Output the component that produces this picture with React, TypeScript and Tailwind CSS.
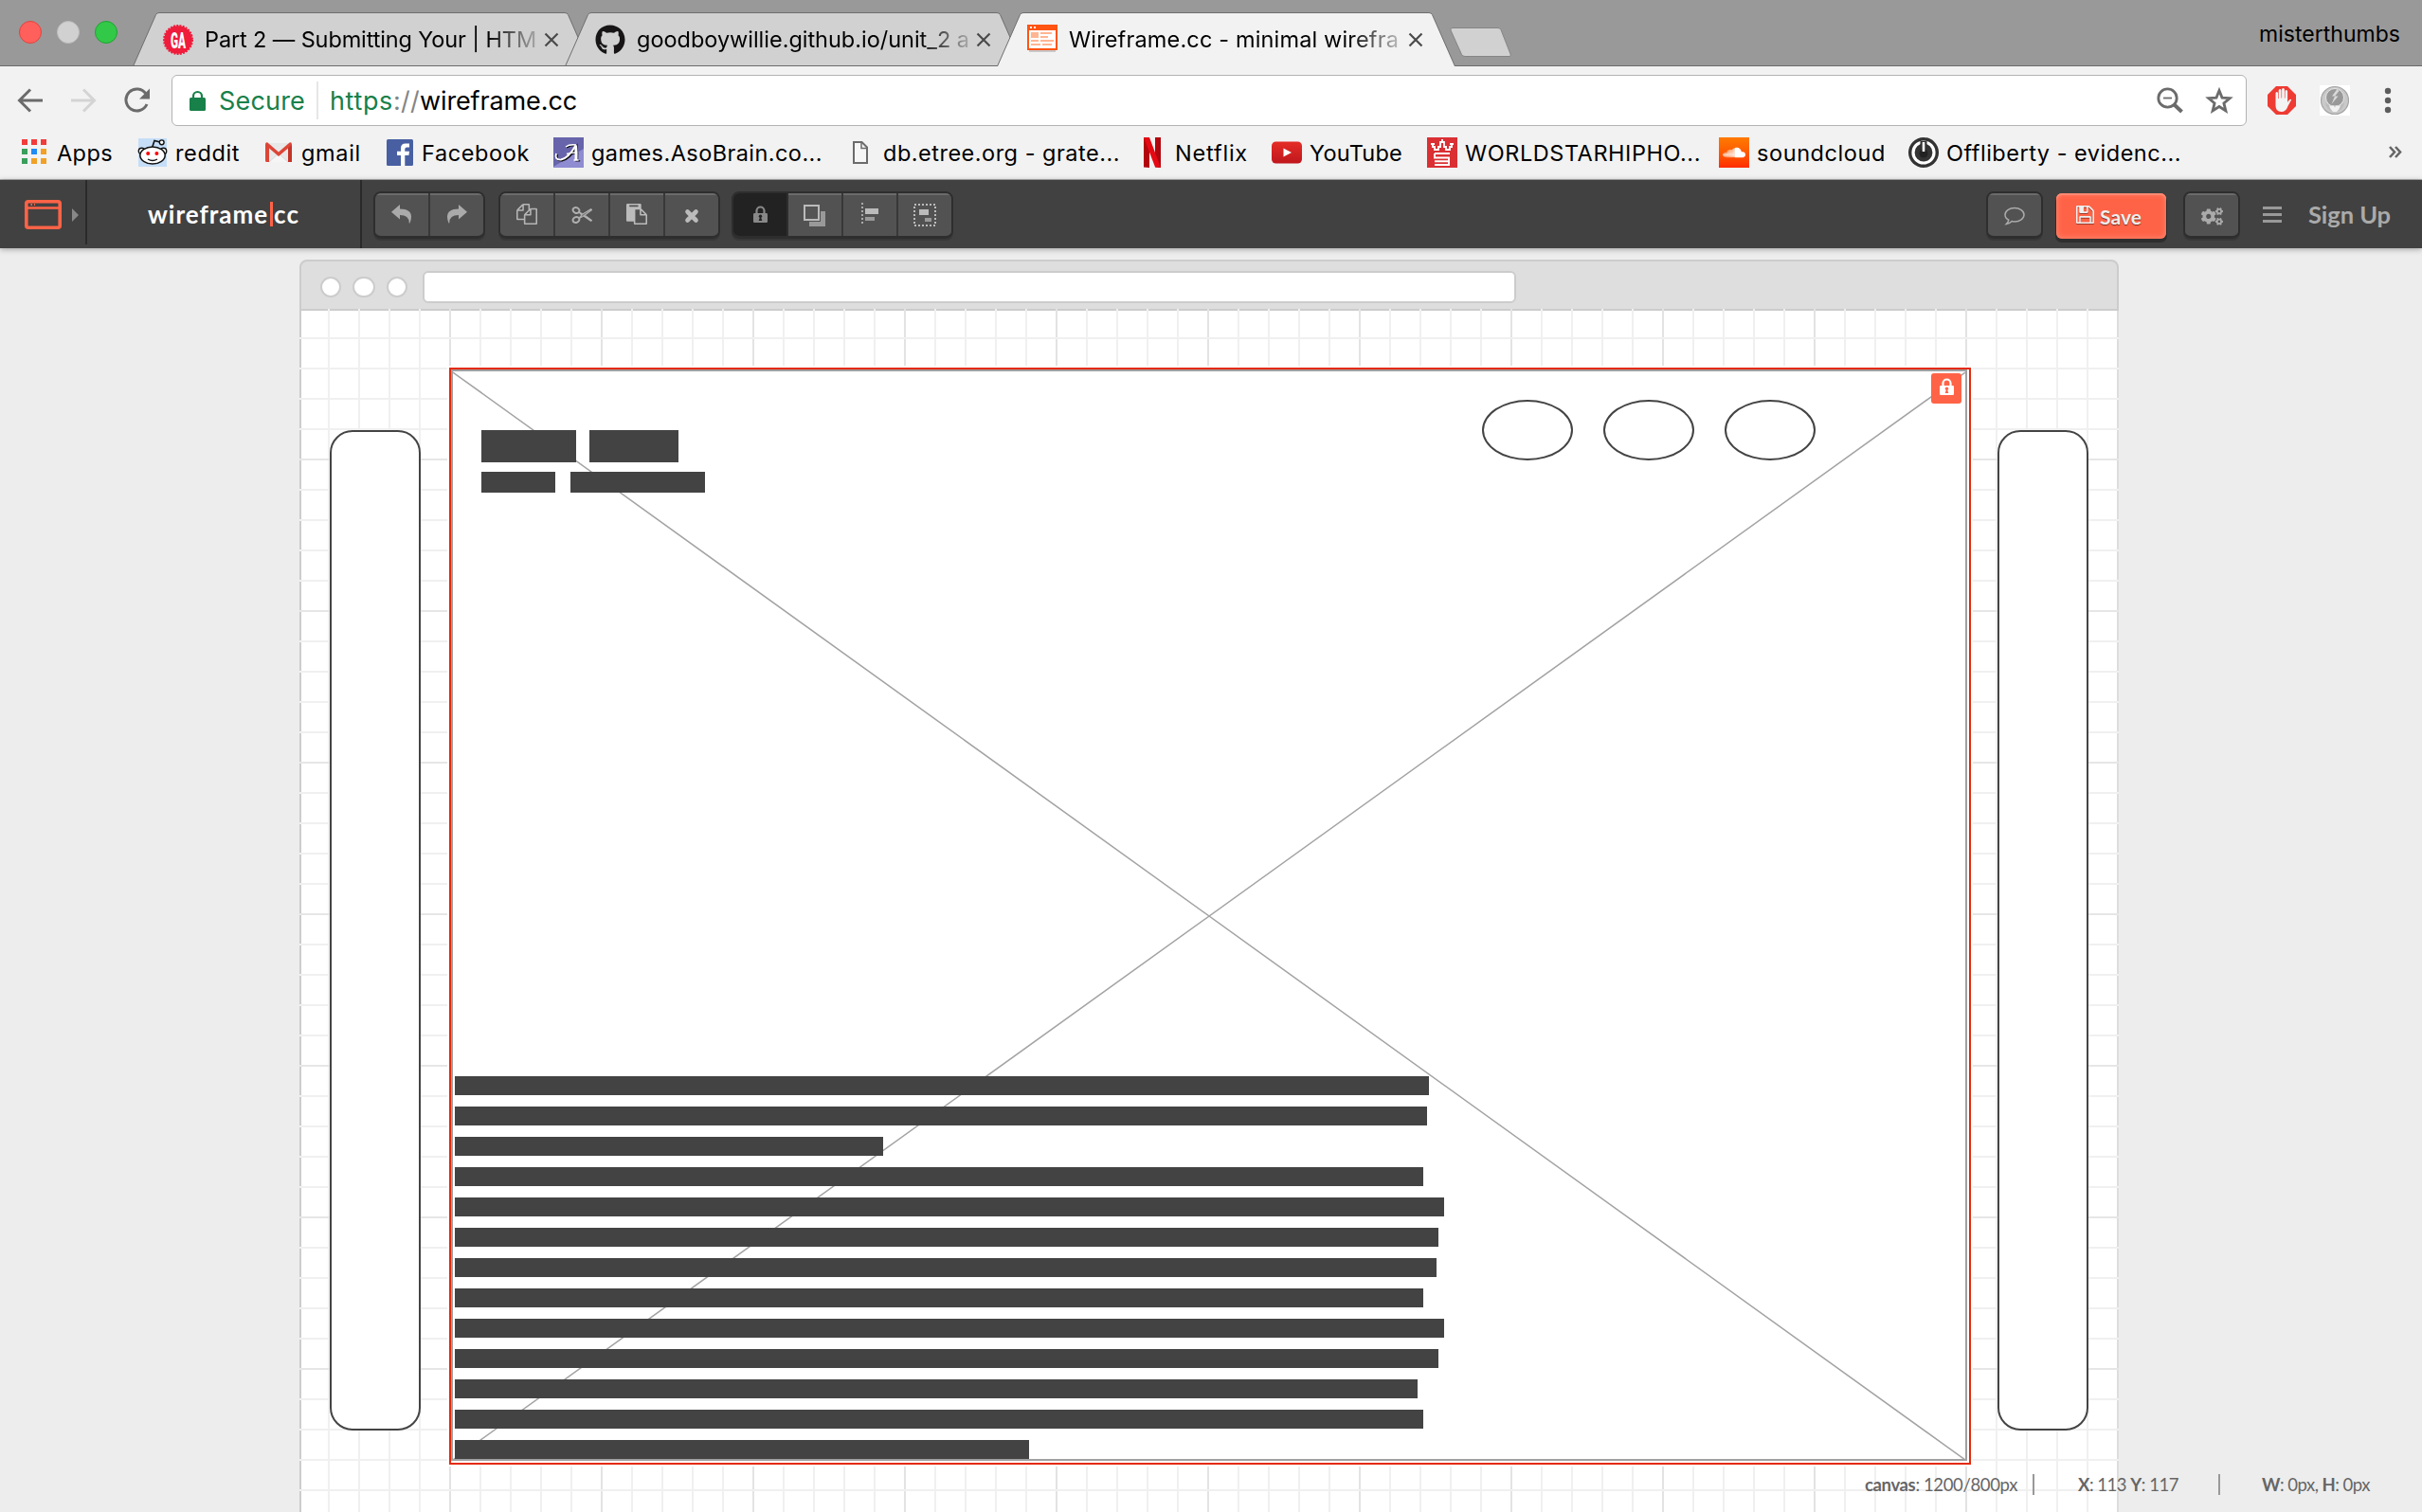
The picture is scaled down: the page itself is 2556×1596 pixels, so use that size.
import { useLayoutEffect, useRef, useState } from "react";
import type { ReactNode } from "react";
import { FaGithub, FaSoundcloud, FaCogs } from "react-icons/fa";

/* Text whose tracking is adjusted so that it fills a given width. */
function Fit({ w, className = "", children }: { w: number; className?: string; children: ReactNode }) {
  const ref = useRef<HTMLSpanElement>(null);
  const [ls, setLs] = useState(0);
  useLayoutEffect(() => {
    const el = ref.current;
    if (!el) return;
    const n = (el.textContent || "").length;
    setLs((w - el.getBoundingClientRect().width) / n);
  }, [w]);
  return (
    <span ref={ref} className={"inline-block shrink-0 whitespace-pre " + className} style={{ letterSpacing: ls }}>
      {children}
    </span>
  );
}

/* ---------- favicons ---------- */

function GaIcon() {
  return (
    <svg className="overflow-visible" width="32" height="32" viewBox="0 0 32 32">
      <circle cx="16" cy="16" r="14.8" fill="#ef1c3b" />
      <circle cx="16" cy="16" r="15" fill="none" stroke="#ef1c3b" strokeWidth="2" strokeDasharray="1.96 1.3" />
      <text x="16" y="24.5" textAnchor="middle" textLength="16" lengthAdjust="spacingAndGlyphs" fontFamily="Roboto" fontWeight="900" fontSize="24" fill="#fff">GA</text>
    </svg>
  );
}

function WireIcon() {
  return (
    <svg width="32" height="32" viewBox="0 0 32 32">
      <rect x="2" y="27" width="28" height="2" fill="#c9c9c9" />
      <rect x="1" y="1" width="30" height="25" fill="#fff" stroke="#ff5412" strokeWidth="2" />
      <rect x="0" y="0" width="32" height="6" fill="#ff5412" />
      <path d="M3 2h2v2H3zM7 2h2v2H7z" fill="#fff" />
      <path d="M4 8h8v6H4zM14 8h12v2H14zM14 12h8v2h-8zM4 16h8v2H4zM14 16h14v2H14zM4 20h10v2H4zM16 20h10v2H16z" fill="#ffb592" />
    </svg>
  );
}

function AppsIcon() {
  return (
    <svg width="26" height="26" viewBox="0 0 26 26">
      <path d="M0 0h6v6H0zM10 0h6v6h-6zM20 0h6v6h-6z" fill="#f23b3b" />
      <path d="M0 10h6v6H0zM0 20h6v6H0z" fill="#3a9e5c" />
      <path d="M10 10h6v6h-6z" fill="#1f8bf5" />
      <path d="M20 10h6v6h-6zM10 20h6v6h-6zM20 20h6v6h-6z" fill="#f0a126" />
    </svg>
  );
}

function RedditIcon() {
  return (
    <svg width="32" height="32" viewBox="0 0 32 32">
      <rect x="1" y="1" width="30" height="30" fill="#c6def7" />
      <path d="M15.5 11 18 3.5l6 1.5" fill="none" stroke="#111" strokeWidth="1.6" />
      <circle cx="25.7" cy="5.3" r="2.4" fill="#fff" stroke="#111" strokeWidth="1.4" />
      <circle cx="4.5" cy="14.5" r="3.2" fill="#fff" stroke="#111" strokeWidth="1.4" />
      <circle cx="27.5" cy="14.5" r="3.2" fill="#fff" stroke="#111" strokeWidth="1.4" />
      <ellipse cx="16" cy="19" rx="13.2" ry="9" fill="#fff" stroke="#111" strokeWidth="1.5" />
      <circle cx="11.2" cy="17" r="2" fill="#f00" />
      <circle cx="20.4" cy="17" r="2" fill="#f00" />
      <path d="M11 23q5 3 10 0" fill="none" stroke="#111" strokeWidth="1.4" />
    </svg>
  );
}

function GmailIcon() {
  return (
    <svg width="28" height="22" viewBox="0 0 28 22">
      <rect x="1" y="1" width="26" height="20" rx="1" fill="#e8e8e8" />
      <path d="M4 21 14 11.5 24 21z" fill="#f5f5f5" />
      <path d="M4 21 14 12 24 21" fill="none" stroke="#cfcfcf" strokeWidth="0.8" />
      <path d="M0 2.5Q0 0 2.4.4L14 10.4 25.6.4Q28 0 28 2.5V21h-4V6.6L14 15 4 6.6V21H1.5Q0 21 0 19.500z" fill="#dc4537" />
      <path d="M24 6.600l4-3.500V20q0 1-1.500 1H24z" fill="#c43428" />
    </svg>
  );
}

function FacebookIcon() {
  return (
    <svg width="28" height="28" viewBox="0 0 28 28">
      <rect width="28" height="28" rx="1.5" fill="#4860a2" />
      <path d="M15 28V17h-4v-4.300h4V9.500Q15 4.500 20 4.500h4v4h-2.700q-2 0-2 2v2.200H24L23.400 17h-4.100v11z" fill="#fff" />
    </svg>
  );
}

function AsoIcon() {
  return (
    <svg width="32" height="32" viewBox="0 0 32 32">
      <rect width="32" height="32" fill="#6764ab" />
      <path d="M0 31 32 12v20H0z" fill="#8f8cd2" />
      <g fill="none" stroke="#111" strokeWidth="2" transform="translate(1.200 .9)">
        <path d="M3 17q-2 7 5 6.500Q16 22 23.500 8.500q1 8 .5 15.500" />
        <path d="M14 17.500q5-1.500 11-1.500M22 24h5M13 10q4-3 11-2" strokeWidth="1.400" />
      </g>
      <g fill="none" stroke="#fff">
        <path d="M3 17q-2 7 5 6.500Q16 22 23.500 8.500" strokeWidth="1.800" />
        <path d="M23.500 8.500q1 8 .5 15.500" strokeWidth="3" />
        <path d="M14 17.500q5-1.500 11-1.500M21.500 24h5M13 10q4-3 11-2" strokeWidth="1.400" />
      </g>
    </svg>
  );
}

function PageIcon() {
  return (
    <svg width="16" height="24" viewBox="0 0 16 24">
      <path d="M1 1h8.500L15 6.500V23H1z" fill="#f6f6f6" stroke="#6b6b6b" strokeWidth="2" />
      <path d="M9 1v6.500h6" fill="none" stroke="#6b6b6b" strokeWidth="1.500" />
    </svg>
  );
}

function NetflixIcon() {
  return (
    <svg width="18" height="32" viewBox="0 0 18 32">
      <path d="M0 0h6v32l-6-.5zM12 0h6v32l-6-.5z" fill="#b1060f" />
      <path d="M0 0h6l12 32-6-.7z" fill="#e50914" />
    </svg>
  );
}

function YoutubeIcon() {
  return (
    <svg width="32" height="24" viewBox="0 0 32 24">
      <defs>
        <linearGradient id="yt" x1="0" y1="0" x2="0" y2="1">
          <stop offset="0" stopColor="#e52d27" />
          <stop offset="1" stopColor="#bf171d" />
        </linearGradient>
      </defs>
      <rect y=".5" width="32" height="23" rx="4.500" fill="url(#yt)" />
      <path d="M12.500 7.500v9l8.500-4.500z" fill="#fff" />
    </svg>
  );
}

function WshhIcon() {
  return (
    <svg width="32" height="32" viewBox="0 0 32 32">
      <rect width="32" height="32" fill="#da3034" />
      <path d="M4 7h4M6 7v3h2v3h4v-3h2V5h4v5h2v3h4v-3h2V7M24 7h4M16 2v4" fill="none" stroke="#fff" strokeWidth="1.800" />
      <path d="M8 17h16M8 17v4.500h15v3.800H8M23 25v4H8" fill="none" stroke="#fff" strokeWidth="1.900" />
    </svg>
  );
}

function SoundcloudIcon() {
  return (
    <div className="flex size-8 items-center justify-center bg-gradient-to-b from-[#ff7a00] to-[#ff2a00] text-white">
      <FaSoundcloud size={24} />
    </div>
  );
}

function OfflibertyIcon() {
  return (
    <svg width="32" height="32" viewBox="0 0 32 32">
      <circle cx="16" cy="16" r="16" fill="#333" />
      <circle cx="16" cy="16" r="11" fill="none" stroke="#fff" strokeWidth="3.200" />
      <path d="M12.500 4h7v14h-7z" fill="#333" />
      <circle cx="16" cy="17" r="4.500" fill="#222" />
      <path d="M16 5v10" stroke="#fff" strokeWidth="2.600" />
    </svg>
  );
}

/* ---------- browser chrome ---------- */

function Tab({ icon, title, w, active = false, className = "" }: { icon: ReactNode; title: string; w: number; active?: boolean; className?: string }) {
  return (
    <div className={"relative h-[57px] w-[484px] shrink-0 " + className}>
      <svg className="absolute inset-0" width="484" height="57" viewBox="0 0 484 57">
        <path
          d="M0.500 57 24.500 2.500Q25.500 .5 28 .5H456Q458.500 .5 459.500 2.500L483.500 57"
          fill={active ? "#f2f2f2" : "#d1d1d1"}
          stroke="#6e6e6e"
        />
        {!active && <path d="M0 56.500h484" stroke="#6a6a6a" />}
      </svg>
      <div className="relative flex h-full items-center pl-8 pr-[34px]">
        <div className="mt-px flex size-8 items-center justify-center">{icon}</div>
        <div className="ml-3 mt-px flex h-10 w-[354px] items-center [mask-image:linear-gradient(to_right,#000_84%,#0002_100%)]">
          <Fit w={w} className="text-[23.5px] leading-8 text-black">{title}</Fit>
        </div>
        <svg className="ml-auto" width="16" height="16" viewBox="0 0 16 16">
          <path d="m1.500 1.500 13 13M14.500 1.500l-13 13" stroke="#4a4a4a" strokeWidth="2.200" />
        </svg>
      </div>
    </div>
  );
}

function TabStrip() {
  return (
    <div className="flex h-[70px] border-b border-[#6a6a6a] bg-[#999]">
      <div className="flex w-[140px] shrink-0 gap-4 pl-5 pt-[22px]">
        <i className="size-6 rounded-full border border-[#e0443e] bg-[#ff605c]" />
        <i className="size-6 rounded-full border border-[#bdbdbd] bg-[#d1d1d1]" />
        <i className="size-6 rounded-full border border-[#1fa233] bg-[#33c948]" />
      </div>
      <div className="flex pt-[13px]">
        <Tab icon={<GaIcon />} title="Part 2 — Submitting Your | HTM" w={350} />
        <Tab icon={<FaGithub size={32} color="#171515" />} title="goodboywillie.github.io/unit_2 a" w={351} className="-ml-[28px]" />
        <Tab icon={<WireIcon />} title="Wireframe.cc - minimal wirefra" w={348} active className="z-10 -ml-[28px]" />
      </div>
      <svg className="-ml-2 mt-7" width="70" height="36" viewBox="0 0 70 36">
        <path d="M5 1.500h48q2 0 3 2L66 29q1 2.500-1 2.500H18q-2.500 0-3.500-2L3 4Q2 1.500 5 1.500z" fill="#d1d1d1" stroke="#858585" />
      </svg>
      <div className="ml-auto pr-[23px] pt-[21px]">
        <Fit w={149} className="text-[23px] leading-[30px] text-black">misterthumbs</Fit>
      </div>
    </div>
  );
}

function AddressBar() {
  return (
    <div className="flex h-[72px] items-start pt-[9px]">
      <div className="flex w-[181px] shrink-0 pl-[18px] pt-[13px]">
        <svg width="28" height="28" viewBox="0 0 28 28">
          <path d="M14 2.500 2.500 14 14 25.500M3 14h24" fill="none" stroke="#6b6b6b" strokeWidth="3" />
        </svg>
        <svg className="ml-7" width="28" height="28" viewBox="0 0 28 28">
          <path d="M14 2.500 25.500 14 14 25.500M1 14h24" fill="none" stroke="#d4d4d4" strokeWidth="3" />
        </svg>
        <svg className="ml-7" width="30" height="28" viewBox="0 0 30 28">
          <path d="M24 7A11.500 11.500 0 1 0 25 18" fill="none" stroke="#6b6b6b" strokeWidth="3" />
          <path d="M28 1.500v11H17z" fill="#6b6b6b" />
        </svg>
      </div>
      <div className="flex h-[54px] w-[2190px] items-center rounded-md border border-[#b3b3b3] bg-white text-[27px] leading-9">
        <svg className="ml-[18px]" width="17" height="22" viewBox="0 0 17 22">
          <rect x="0" y="8" width="17" height="14" rx="1.500" fill="#188049" />
          <path d="M4 9V6.500a4.500 4.500 0 0 1 9 0V9" fill="none" stroke="#188049" strokeWidth="2.200" />
        </svg>
        <Fit w={91} className="ml-[14px] mt-[2px] text-[#188049]">Secure</Fit>
        <div className="ml-3 h-10 w-0.5 bg-[#e6e6e6]" />
        <Fit w={67} className="ml-3 mt-[2px] text-[#188049]">https</Fit>
        <Fit w={28} className="mt-[2px] text-[#858585]">://</Fit>
        <Fit w={166} className="mt-[2px] text-black">wireframe.cc</Fit>
        <svg className="ml-auto" width="28" height="28" viewBox="0 0 28 28">
          <circle cx="11.500" cy="11.500" r="9.700" fill="none" stroke="#6b6b6b" strokeWidth="2.800" />
          <path d="M7 11.500h9" stroke="#6b6b6b" strokeWidth="1.800" />
          <path d="m18 18 8.500 8" stroke="#6b6b6b" strokeWidth="4" />
        </svg>
        <svg className="ml-[23px] mr-[13px]" width="30" height="30" viewBox="0 0 30 30">
          <path d="m15 4.500 3 7.600 8.200.6-6.300 5.200 2 8L15 21.500l-6.900 4.400 2-8-6.300-5.200 8.200-.6z" fill="none" stroke="#6b6b6b" strokeWidth="2.800" />
        </svg>
      </div>
      <svg className="ml-[22px] mt-3" width="30" height="30" viewBox="0 0 30 30">
        <path d="M9 0h12l9 9v12l-9 9H9l-9-9V9z" fill="#ee3b33" />
        <path d="M8.500 16V7.500q0-1.500 1.300-1.500t1.300 1.500V13h.6V4.500q0-1.500 1.400-1.500t1.400 1.500V12.500h.6V3.500Q15.100 2 16.500 2t1.400 1.500v9h.6V5.500q0-1.500 1.300-1.500t1.300 1.500V17l1.800-2.500q1.200-1.300 2.300-.3L21.500 21q-2 6-7 6-6 0-6-6.500z" fill="#f3f3f3" />
      </svg>
      <svg className="ml-[25px] mt-[11px]" width="32" height="32" viewBox="0 0 32 32">
        <rect width="32" height="32" fill="#fff" />
        <circle cx="16" cy="16" r="14.500" fill="#c9c9c9" stroke="#a5a5a5" strokeWidth="1.200" />
        <circle cx="16" cy="13" r="9.500" fill="#999" stroke="#e6e6e6" strokeWidth="1" />
        <path d="m18.500 4-5.500 7.500h3L12.500 20l7-8.500H16L20.500 6z" fill="#d9d9d9" />
        <path d="M6 18q1 9 10 10.500Q25 27 26 18l-4 3.500-6-.5-6 .5z" fill="#bcbcbc" />
        <path d="M10 21.500h5l1 2 1-2h5l-1.500 3.500L18 28h-4l-2.500-3z" fill="#f2f2f2" />
      </svg>
      <svg className="ml-[36px] mt-[13px]" width="8" height="28" viewBox="0 0 8 28">
        <circle cx="4" cy="4" r="3.200" fill="#5c5c5c" />
        <circle cx="4" cy="14" r="3.200" fill="#5c5c5c" />
        <circle cx="4" cy="24" r="3.200" fill="#5c5c5c" />
      </svg>
    </div>
  );
}

function Bookmark({ icon, label, w, className }: { icon: ReactNode; label: string; w: number; className: string }) {
  return (
    <div className={"flex shrink-0 items-center gap-2 " + className}>
      <div className="flex h-8 shrink-0 items-center justify-center">{icon}</div>
      <Fit w={w} className="mt-[2px] text-[23.500px] leading-8 text-black">{label}</Fit>
    </div>
  );
}

function BookmarksBar() {
  return (
    <div className="flex h-12 items-start border-b border-[#b0b0b0] pl-[23px] pt-[2px]">
      <Bookmark icon={<div className="mt-[-2px] pr-[3px]"><AppsIcon /></div>} label="Apps" w={59} className="w-[122px]" />
      <Bookmark icon={<RedditIcon />} label="reddit" w={68} className="w-[135px]" />
      <Bookmark icon={<div className="pr-[2px]"><GmailIcon /></div>} label="gmail" w={63} className="w-[128px]" />
      <Bookmark icon={<div className="pr-px"><FacebookIcon /></div>} label="Facebook" w={114} className="w-[176px]" />
      <Bookmark icon={<AsoIcon />} label="games.AsoBrain.co..." w={244} className="w-[316px]" />
      <Bookmark icon={<div className="pr-[8px]"><PageIcon /></div>} label="db.etree.org - grate..." w={250} className="w-[307px]" />
      <Bookmark icon={<div className="pr-[7px]"><NetflixIcon /></div>} label="Netflix" w={77} className="w-[135px]" />
      <Bookmark icon={<div className="-mt-px"><YoutubeIcon /></div>} label="YouTube" w={98} className="w-[164px]" />
      <Bookmark icon={<WshhIcon />} label="WORLDSTARHIPHO..." w={249} className="w-[308px]" />
      <Bookmark icon={<SoundcloudIcon />} label="soundcloud" w={136} className="w-[200px]" />
      <Bookmark icon={<OfflibertyIcon />} label="Offliberty - evidenc..." w={248} className="w-[290px]" />
      <svg className="ml-auto mr-[21px] mt-[9px]" width="15" height="15" viewBox="0 0 15 15">
        <path d="m2 2 5 5.500L2 13M8 2l5 5.500L8 13" fill="none" stroke="#666" strokeWidth="2.600" />
      </svg>
    </div>
  );
}

/* ---------- editor toolbar ---------- */

function UndoIcon({ flip = false }: { flip?: boolean }) {
  return (
    <svg className={"-mt-1 " + (flip ? "-scale-x-100" : "")} width="22" height="20" viewBox="0 0 22 20">
      <path d="M9 0v4.500Q21 4.500 21 13q0 3-1.500 6.500-.8.300-.8-.5Q18.700 11 9 11v4.500L0 7.700z" fill="#aaa" />
    </svg>
  );
}

function CopyIcon() {
  return (
    <svg className="-mt-1" width="22" height="22" viewBox="0 0 1792 1792" fill="#b5b5b5">
      <path d="M1696 384q40 0 68 28t28 68v1216q0 40-28 68t-68 28h-960q-40 0-68-28t-28-68v-288h-544q-40 0-68-28t-28-68v-672q0-40 20-88t48-76l408-408q28-28 76-48t88-20h416q40 0 68 28t28 68v328q68-40 128-40h416zm-544 213l-299 299h299v-299zm-640-384l-299 299h299v-299zm196 647l316-316v-416h-384v416q0 40-28 68t-68 28h-416v640h512v-256q0-40 20-88t48-76zm956 804v-1152h-384v416q0 40-28 68t-68 28h-416v640h896z" />
    </svg>
  );
}

function CutIcon() {
  return (
    <svg className="-mt-0.5" width="22" height="18" viewBox="0 0 22 18" fill="none" stroke="#b0b0b0">
      <ellipse cx="5" cy="4" rx="3.500" ry="2.800" transform="rotate(25 5 4)" strokeWidth="2" />
      <ellipse cx="5" cy="14" rx="3.500" ry="2.800" transform="rotate(-25 5 14)" strokeWidth="2" />
      <path d="M8 5.800 12 8l8.500-5.200 1 .7L12 10.500 8 12.500M8 5.800l3 3.200-3 3.500M13 10l7.500 5.300 1-.7-7-5" strokeWidth="1.300" />
    </svg>
  );
}

function PasteIcon() {
  return (
    <svg className="-mt-1" width="22" height="22" viewBox="0 0 1792 1792" fill="#bbb">
      <path d="M768 1664h896v-640h-416q-40 0-68-28t-28-68v-416h-384v1152zm256-1440v-64q0-13-9.500-22.500t-22.500-9.500h-704q-13 0-22.500 9.500t-9.500 22.500v64q0 13 9.500 22.500t22.500 9.500h704q13 0 22.500-9.500t9.500-22.500zm256 672h299l-299-299v299zm512 128v672q0 40-28 68t-68 28h-960q-40 0-68-28t-28-68v-160h-544q-40 0-68-28t-28-68v-1344q0-40 28-68t68-28h1088q40 0 68 28t28 68v328q21 13 36 28l408 408q28 28 48 76t20 88z" />
    </svg>
  );
}

function DeleteIcon() {
  return (
    <svg width="16" height="16" viewBox="0 0 16 16">
      <path d="m3.500 3.500 9 9M12.500 3.500l-9 9" stroke="#bbb" strokeWidth="4.600" strokeLinecap="round" />
    </svg>
  );
}

function LockIcon({ color, hole }: { color: string; hole: string }) {
  return (
    <svg className="-mt-1" width="15" height="18" viewBox="0 0 15 18">
      <path d="M3.500 9V5.500a4 4 0 0 1 8 0V9" fill="none" stroke={color} strokeWidth="2.200" />
      <rect x="0" y="8" width="15" height="10" rx="1.200" fill={color} />
      <circle cx="7.500" cy="11.300" r="1.700" fill={hole} />
      <path d="M7 12h1l1.300 4H5.700z" fill={hole} />
    </svg>
  );
}

function LayerIcon() {
  return (
    <svg width="24" height="24" viewBox="0 0 24 24">
      <path d="M18 7h5v16H6v-5h12z" fill="#999" />
      <rect x="1" y="1" width="15" height="15" fill="#555" stroke="#bbb" strokeWidth="2" />
    </svg>
  );
}

function AlignIcon() {
  return (
    <svg className="-mt-1" width="18" height="24" viewBox="0 0 18 24">
      <path d="M1 0v23" stroke="#aaa" strokeWidth="2" strokeDasharray="2 2" />
      <path d="M4 6h14v6H4z" fill="#bbb" />
      <path d="M4 15h10v4H4z" fill="#999" />
    </svg>
  );
}

function GroupIcon() {
  return (
    <svg className="-mt-0.5" width="24" height="24" viewBox="0 0 24 24">
      <rect x="1" y="1" width="22" height="22" fill="none" stroke="#bbb" strokeWidth="2" strokeDasharray="2 2" />
      <path d="M6 6h10v6H6z" fill="#bbb" />
      <path d="M12 15h7v4h-7z" fill="#999" />
    </svg>
  );
}

function CommentIcon() {
  return (
    <svg width="22" height="20" viewBox="0 0 22 20">
      <path d="M11 1.500C5.500 1.500 1 4.700 1 8.700c0 2.300 1.500 4.200 3.800 5.500-.3 1.600-1 3-2.300 4.200 2.400-.3 4.300-1.300 5.600-2.800q1.400.3 2.900.3c5.500 0 10-3.200 10-7.200s-4.500-7.200-10-7.200z" fill="none" stroke="#aaa" strokeWidth="1.500" />
    </svg>
  );
}

const CELL =
  "flex h-12 w-[58px] items-center justify-center border-r-2 border-[#383838] bg-[#525252] shadow-[inset_0_2px_0_#6b6b6b] last:w-[56px] last:border-r-0";

function ButtonGroup({ icons, firstActive = false, className = "" }: { icons: ReactNode[]; firstActive?: boolean; className?: string }) {
  return (
    <div className={"flex overflow-hidden rounded-[8px] border-x-2 border-t-2 border-b-[3px] border-[#2e2e2e] shadow-[0_2px_0_#383838] " + className}>
      {icons.map((icon, i) =>
        firstActive && i === 0 ? (
          <div key={i} className="flex h-12 w-[58px] items-center justify-center border-r-2 border-[#2e2e2e] bg-[#222]">{icon}</div>
        ) : (
          <div key={i} className={CELL}>{icon}</div>
        ),
      )}
    </div>
  );
}

function EditorToolbar() {
  return (
    <div className="relative z-10 flex h-[72px] shrink-0 bg-[#414141] shadow-[0_1px_6px_#00000059] [font-family:Lato,sans-serif]">
      <div className="flex h-[68px] w-[92px] items-center border-r-2 border-[#2a2a2a] pl-[26px] pt-[5px]">
        <svg width="39" height="31" viewBox="0 0 39 31">
          <rect x="1.800" y="1.800" width="35.400" height="27.400" rx="2" fill="none" stroke="#ff6347" strokeWidth="3.600" />
          <path d="M2 8.500h35" stroke="#ff6347" strokeWidth="2.400" />
          <path d="M6.500 4h1.500v2h-1.500zM10 4h1v2h-1z" fill="#ff6347" />
        </svg>
        <svg className="ml-[11px] mt-px" width="7" height="14" viewBox="0 0 7 14">
          <path d="M0 0v14l7-7z" fill="#888" />
        </svg>
      </div>
      <div className="flex w-[290px] items-center border-r-2 border-[#2a2a2a] pl-16 pb-px text-[26px] font-bold leading-8 text-white">
        <Fit w={127}>wireframe</Fit>
        <i className="ml-[2px] mt-px h-[26px] w-[3px] bg-[#ff6347]" />
        <Fit w={27} className="ml-[1px]">cc</Fit>
      </div>
      <div className="flex items-start pl-[12px] pt-3">
        <ButtonGroup className="h-[50px]" icons={[<UndoIcon key="u" />, <UndoIcon key="r" flip />]} />
        <ButtonGroup className="ml-[14px] h-[50px]" icons={[<CopyIcon key="c" />, <CutIcon key="x" />, <PasteIcon key="p" />, <DeleteIcon key="d" />]} />
        <ButtonGroup
          className="ml-[12px] h-[50px]"
          firstActive
          icons={[<LockIcon key="l" color="#888" hole="#222" />, <LayerIcon key="y" />, <AlignIcon key="a" />, <GroupIcon key="g" />]}
        />
      </div>
      <div className="ml-auto flex items-start pt-3">
        <ButtonGroup className="h-[50px]" icons={[<CommentIcon key="c" />]} />
        <div className="ml-[14px] mt-[2px] flex h-12 w-[116px] items-center rounded-md bg-[#ff6347] pl-[21px] text-[#eee] shadow-[0_3px_0_1px_#2e2e2e,inset_0_2px_0_#ff8a73,inset_0_0_6px_#ff8f7a]">
          <svg className="-mt-1 drop-shadow-[0_1px_0_#0006]" width="19" height="19" viewBox="128 128 1536 1536" fill="currentColor">
            <path d="M512 1536h768v-384h-768v384zm896 0h128v-896q0-14-10-38.500t-20-34.500l-281-281q-10-10-34-20t-39-10v416q0 40-28 68t-68 28h-576q-40 0-68-28t-28-68v-416h-128v1280h128v-416q0-40 28-68t68-28h832q40 0 68 28t28 68v416zm-384-928v-320q0-13-9.500-22.500t-22.500-9.500h-192q-13 0-22.500 9.500t-9.500 22.500v320q0 13 9.500 22.500t22.500 9.500h192q13 0 22.500-9.500t9.500-22.500zm640 32v928q0 40-28 68t-68 28h-1344q-40 0-68-28t-28-68v-1344q0-40 28-68t68-28h928q40 0 88 20t76 48l280 280q28 28 48 76t20 88z" />
          </svg>
          <Fit w={44} className="ml-[6px] mt-px text-[21px] font-bold leading-6 [text-shadow:0_1px_1px_#0008]">Save</Fit>
        </div>
        <ButtonGroup className="ml-[18px] h-[50px]" icons={[<FaCogs key="g" size={23} color="#aaa" />]} />
        <div className="ml-[24px] mt-4 flex w-5 flex-col gap-1">
          <i className="h-[3px] bg-[#999]" />
          <i className="h-[3px] bg-[#999]" />
          <i className="h-[3px] bg-[#999]" />
        </div>
        <Fit w={87} className="-mt-px ml-[28px] mr-[33px] text-[25.5px] font-bold leading-[50px] text-[#aaa]">Sign Up</Fit>
      </div>
    </div>
  );
}

/* ---------- canvas ---------- */

const TEXT_BARS = [1028, 1026, 452, 1022, 1044, 1038, 1036, 1022, 1044, 1038, 1016, 1022, 606];

function Grid() {
  const vs = Array.from({ length: 59 }, (_, i) => 31 + i * 32);
  const hs = Array.from({ length: 39 }, (_, i) => 31 + i * 32);
  return (
    <svg className="absolute -left-0.5 -top-0.5" width="1920" height="1270" viewBox="0 0 1920 1270">
      {vs.map((x, i) => (
        <rect key={"v" + x} x={x - 1} y="0" width="2" height="1270" fill={i % 5 === 4 ? "#e3e3e3" : "#f0f0f0"} />
      ))}
      {hs.map((y, i) => (
        <rect key={"h" + y} x="0" y={y - 1} width="1920" height="2" fill={i % 5 === 4 ? "#e6e6e6" : "#f0f0f0"} />
      ))}
    </svg>
  );
}

/* Shapes sit at their drawn position on the free canvas, whose origin is the sheet's inner corner. */
function Sheet() {
  return (
    <div className="relative h-[1268px] w-[1920px] border-l-2 border-r-2 border-l-[#ccc] border-r-[#ddd] bg-white">
      <Grid />
      <div className="absolute left-[30px] top-[126px] h-[1056px] w-24 rounded-[24px] border-2 border-[#444] bg-white" />
      <div className="absolute left-[1790px] top-[126px] h-[1056px] w-24 rounded-[24px] border-2 border-[#444] bg-white" />
      <div className="absolute left-[154px] top-[58px] h-[1162px] w-[1610px] bg-white p-0.5">
        <div className="h-full w-full border-2 border-[#e42a0c]">
          <div className="relative h-[1152px] w-[1600px] border-2 border-[#a0a0a0]">
            <svg className="absolute inset-0" width="1596" height="1148" viewBox="0 0 1596 1148">
              <path d="M0 1 1596 1149M1596 1 0 1149" stroke="#a3a3a3" strokeWidth="1.500" />
            </svg>
            <div className="absolute left-[30px] top-[62px] flex flex-col gap-[10px]">
              <div className="flex gap-[14px]">
                <i className="h-[34px] w-[100px] bg-[#434343]" />
                <i className="h-[34px] w-[94px] bg-[#434343]" />
              </div>
              <div className="flex gap-4">
                <i className="h-[22px] w-[78px] bg-[#434343]" />
                <i className="h-[22px] w-[142px] bg-[#434343]" />
              </div>
            </div>
            <div className="absolute left-[1086px] top-[30px] flex gap-8">
              <i className="h-16 w-24 rounded-[50%] border-2 border-[#444] bg-white" />
              <i className="h-16 w-24 rounded-[50%] border-2 border-[#444] bg-white" />
              <i className="h-16 w-24 rounded-[50%] border-2 border-[#444] bg-white" />
            </div>
            <div className="absolute left-[1560px] top-[2px] flex size-8 items-center justify-center rounded-[3px] bg-[#ff6347]">
              <LockIcon color="#fff" hole="#ff6347" />
            </div>
            <div className="absolute left-[2px] top-[744px] flex flex-col gap-3">
              {TEXT_BARS.map((w, i) => (
                <i key={i} className="h-5 bg-[#434343]" style={{ width: w }} />
              ))}
            </div>
          </div>
        </div>
      </div>
    </div>
  );
}

function StatusBar() {
  return (
    <div className="absolute bottom-[17px] right-[55px] flex items-center text-[18.5px] leading-6 text-[#666] [font-family:Lato,sans-serif]">
      <Fit w={161}><b>canvas</b>: 1200/800px</Fit>
      <i className="ml-4 h-[22px] w-0.5 bg-[#999]" />
      <Fit w={106} className="ml-[46px]"><b>X</b>: 113 <b>Y</b>: 117</Fit>
      <i className="ml-[42px] h-[22px] w-0.5 bg-[#999]" />
      <Fit w={114} className="ml-[44px]"><b>W</b>: 0px, <b>H</b>: 0px</Fit>
    </div>
  );
}

export default function App() {
  return (
    <div className="relative flex h-[1596px] w-[2556px] flex-col overflow-hidden bg-[#ededed] [font-family:Inter,sans-serif]">
      <TabStrip />
      <div className="h-[120px] shrink-0 bg-[#f2f2f2]">
        <AddressBar />
        <BookmarksBar />
      </div>
      <EditorToolbar />
      <main className="ml-[316px] mt-3 w-[1920px] shrink-0">
        <div className="flex h-[54px] items-center rounded-t-lg border-2 border-[#ccc] bg-[#dedede] pl-5 pt-1">
          <i className="size-[22px] rounded-full border-2 border-[#ccc] bg-white" />
          <i className="ml-3 h-[22px] w-6 rounded-full border-2 border-[#ccc] bg-white" />
          <i className="ml-3 size-[22px] rounded-full border-2 border-[#ccc] bg-white" />
          <i className="ml-4 h-[34px] w-[1154px] rounded-md border-2 border-[#ccc] bg-white" />
        </div>
        <Sheet />
      </main>
      <StatusBar />
    </div>
  );
}
